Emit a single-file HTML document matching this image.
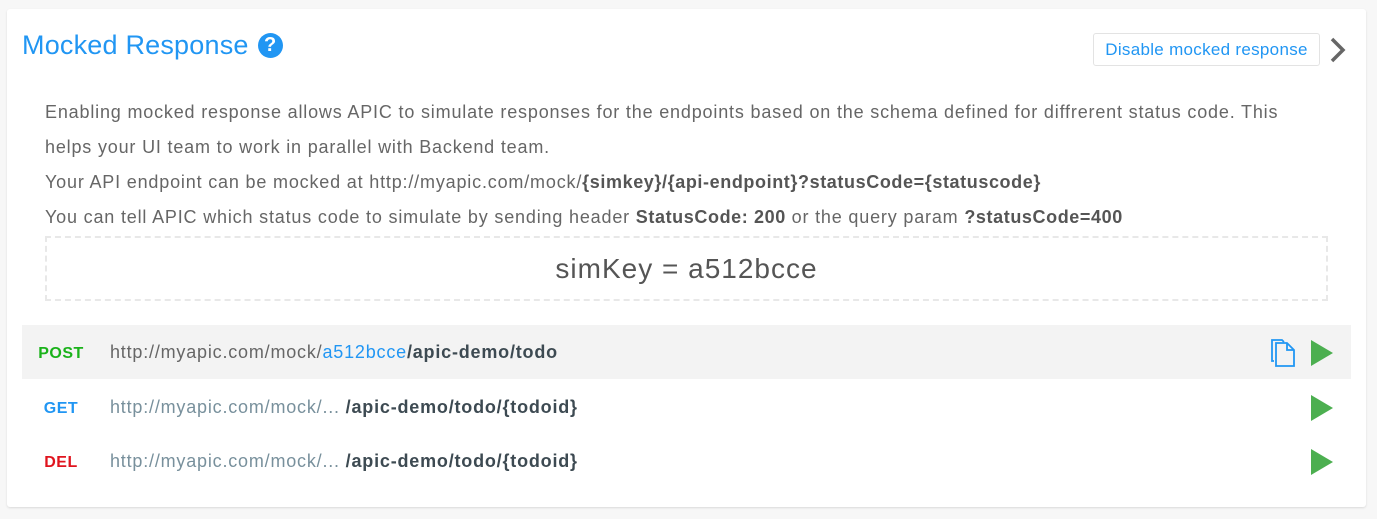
<!DOCTYPE html>
<html><head><style>
body{margin:0;background:#f7f7f7;font-family:"Liberation Sans",Arial,sans-serif;width:1377px;height:519px;overflow:hidden}
.card{position:absolute;left:7px;top:9px;width:1359px;height:498px;background:#fff;border-radius:3px;box-shadow:0 1px 2px rgba(0,0,0,.12)}
.title{position:absolute;left:15px;top:21px;font-size:27px;color:#2196f3;letter-spacing:.2px}
.q{display:inline-block;width:25px;height:25px;border-radius:50%;background:#2196f3;color:#fff;font-size:20px;font-weight:bold;text-align:center;line-height:25px;vertical-align:3px;margin-left:9px;letter-spacing:0}
.btn{position:absolute;left:1086px;top:24px;width:227px;height:33px;border:1px solid #e3e3e3;border-radius:3px;box-sizing:border-box;color:#2196f3;font-size:17px;line-height:31px;text-align:center;letter-spacing:.3px}
.chev{position:absolute;left:1321px;top:28px}
.desc{position:absolute;left:38px;top:86px;font-size:18px;color:#666;line-height:35px;width:1320px;letter-spacing:.82px}
.desc b{color:#555;letter-spacing:.6px}
.sim{position:absolute;left:38px;top:227px;width:1283px;height:65px;border:2px dashed #e8e8e8;box-sizing:border-box;text-align:center;font-size:28px;color:#555;line-height:61px;letter-spacing:1px}
.row{position:absolute;left:15px;width:1329px;height:54px;font-size:18px;line-height:54px}
.m{position:absolute;left:0;top:2px;width:78px;text-align:center;font-weight:bold;font-size:16px;letter-spacing:.5px}
.u{position:absolute;left:88px;color:#78909c;letter-spacing:.8px}
.u b{color:#3d4a52}
.play{position:absolute;left:1288px;top:15px}
</style></head><body>
<div class="card">
<div class="title">Mocked Response<span class="q">?</span></div>
<div class="btn">Disable mocked response</div>
<svg class="chev" width="20" height="26" viewBox="0 0 20 26"><path d="M4 2 L15 13 L4 24" fill="none" stroke="#666" stroke-width="3.5"/></svg>
<div class="desc">Enabling mocked response allows APIC to simulate responses for the endpoints based on the schema defined for diffrerent status code. This<br>helps your UI team to work in parallel with Backend team.<br>Your API endpoint can be mocked at http://myapic.com/mock/<b>{simkey}/{api-endpoint}?statusCode={statuscode}</b><br>You can tell APIC which status code to simulate by sending header <b>StatusCode: 200</b> or the query param <b>?statusCode=400</b></div>
<div class="sim">simKey = a512bcce</div>
<div class="row" style="top:316px;background:#f3f3f3"><span class="m" style="color:#1ab21a">POST</span><span class="u" style="color:#666">http://myapic.com/mock/<span style="color:#2196f3">a512bcce</span><b style="color:#3d4a52">/apic-demo/todo</b></span>
<svg style="position:absolute;left:1247px;top:13px" width="28" height="30" viewBox="0 0 28 30"><path d="M5 23 H3 V2 H13 L15 4" fill="none" stroke="#2196f3" stroke-width="1.8"/><path d="M7 5 H18 L25 12 V28 H7 Z M18 5 V12 H25" fill="none" stroke="#2196f3" stroke-width="1.8"/></svg>
<svg class="play" width="24" height="26"><path d="M1 0 L23 13 L1 26Z" fill="#4caf50"/></svg></div>
<div class="row" style="top:371px"><span class="m" style="color:#2196f3">GET</span><span class="u">http://myapic.com/mock/... <b>/apic-demo/todo/{todoid}</b></span><svg class="play" width="24" height="26"><path d="M1 0 L23 13 L1 26Z" fill="#4caf50"/></svg></div>
<div class="row" style="top:425px"><span class="m" style="color:#e0141e">DEL</span><span class="u">http://myapic.com/mock/... <b>/apic-demo/todo/{todoid}</b></span><svg class="play" width="24" height="26"><path d="M1 0 L23 13 L1 26Z" fill="#4caf50"/></svg></div>
</div>
</body></html>
